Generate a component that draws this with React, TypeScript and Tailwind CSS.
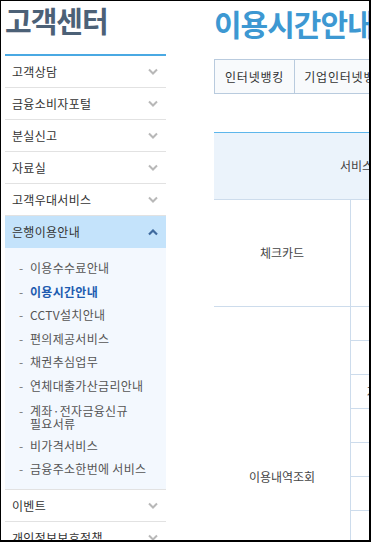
import React from "react";

const FONT = { fontFamily: '"Noto Sans CJK KR", "Noto Sans", sans-serif' };

function ChevronDown() {
  return (
    <svg width="10" height="7" viewBox="0 0 10 7" fill="none">
      <path d="M1 1.5 L5 5.5 L9 1.5" stroke="#b8b8b8" strokeWidth="2" />
    </svg>
  );
}

function ChevronUp() {
  return (
    <svg width="10" height="7" viewBox="0 0 10 7" fill="none">
      <path d="M1 5.5 L5 1.5 L9 5.5" stroke="#3f6a9e" strokeWidth="2.2" />
    </svg>
  );
}

const menuTop = ["고객상담", "금융소비자포털", "분실신고", "자료실", "고객우대서비스"];

const subItems: { label: React.ReactNode; active?: boolean; two?: boolean }[] = [
  { label: "이용수수료안내" },
  { label: "이용시간안내", active: true },
  { label: "CCTV설치안내" },
  { label: "편의제공서비스" },
  { label: "채권추심업무" },
  { label: "연체대출가산금리안내" },
  {
    label: (
      <>
        <span className="block">계좌·전자금융신규</span>
        <span className="block">필요서류</span>
      </>
    ),
    two: true,
  },
  { label: "비가격서비스" },
  { label: "금융주소한번에 서비스" },
];

function MenuItem({ label }: { label: string }) {
  return (
    <div className="h-[32px] border-b border-[#e2e2e2] flex items-center justify-between pl-[7px] pr-[8px]">
      <span className="text-[12px] text-[#333] tracking-[0.3px]">{label}</span>
      <ChevronDown />
    </div>
  );
}

export default function App() {
  return (
    <div
      className="w-[371px] h-[542px] overflow-hidden bg-white border-black border-t border-l border-r-2 border-b-2 flex"
      style={FONT}
    >
      <aside className="ml-[4px] w-[161px] shrink-0">
        <div className="h-[53px] pt-[1px]">
          <div className="text-[29px] leading-[36px] font-semibold text-[#4c6177] tracking-[-1px] whitespace-nowrap">고객센터</div>
        </div>
        <div className="h-[2px] bg-[#4aa9e3]" />
        {menuTop.map((m) => (
          <MenuItem key={m} label={m} />
        ))}
        <div className="h-[32px] bg-[#c4e3fb] flex items-center justify-between pl-[7px] pr-[8px]">
          <span className="text-[12px] text-[#333] tracking-[0.3px]">은행이용안내</span>
          <ChevronUp />
        </div>
        <div className="bg-[#f3f8fe] border-b border-[#e2e2e2] pt-[8.25px] pb-[8.25px]">
          {subItems.map((s, i) => (
            <div
              key={i}
              className={
                "flex pl-[14px] text-[12px] tracking-[0.3px] " +
                (s.two ? "pt-[6.75px] pb-[3.75px] leading-[13px]" : "py-[5px] leading-[13.5px]")
              }
            >
              <span className="w-[11px] shrink-0 text-[#777]">-</span>
              <span className={s.active ? "font-bold text-[#1d5cb0]" : "text-[#555]"}>{s.label}</span>
            </div>
          ))}
        </div>
        <MenuItem label="이벤트" />
        <MenuItem label="개인정보보호정책" />
      </aside>

      <main className="ml-[48px] w-[520px] shrink-0">
        <div className="h-[58px] pt-[4px]">
          <div className="text-[30px] leading-[36px] font-semibold text-[#3d98d2] tracking-[-1px] whitespace-nowrap">이용시간안내</div>
        </div>
        <div className="h-[35px] flex border border-[#b9cbde] bg-[#f8fafc] text-[12px] text-[#333]">
          <div className="px-[10px] flex items-center border-r border-[#b9cbde] tracking-[0.8px]">인터넷뱅킹</div>
          <div className="px-[9px] flex items-center border-r border-[#b9cbde] tracking-[0.8px]">기업인터넷뱅킹</div>
          <div className="px-[10px] flex items-center tracking-[0.8px]">스마트뱅킹</div>
        </div>
        <div className="h-[38px]" />
        <div className="w-[285px] text-[12px] text-[#444]">
          <div className="h-[68px] border-t border-[#5db6eb] border-b border-b-[#cddcec] bg-[#ebf3fb] flex items-center justify-center">
            서비스
          </div>
          <div className="flex">
            <div className="w-[137px] h-[107px] border-r border-b border-[#cddcec] flex items-center justify-center">
              체크카드
            </div>
            <div className="w-[148px] h-[107px] border-b border-[#cddcec]" />
          </div>
          <div className="flex">
            <div className="w-[137px] h-[340px] border-r border-[#cddcec] flex items-center justify-center">
              이용내역조회
            </div>
            <div className="w-[148px] flex flex-col">
              {Array.from({ length: 10 }).map((_, i) => (
                <div key={i} className="h-[34px] border-b border-[#cddcec] flex items-center pl-[16px]">
                  {i === 2 ? "자동이체조회" : ""}
                </div>
              ))}
            </div>
          </div>
        </div>
      </main>
    </div>
  );
}
